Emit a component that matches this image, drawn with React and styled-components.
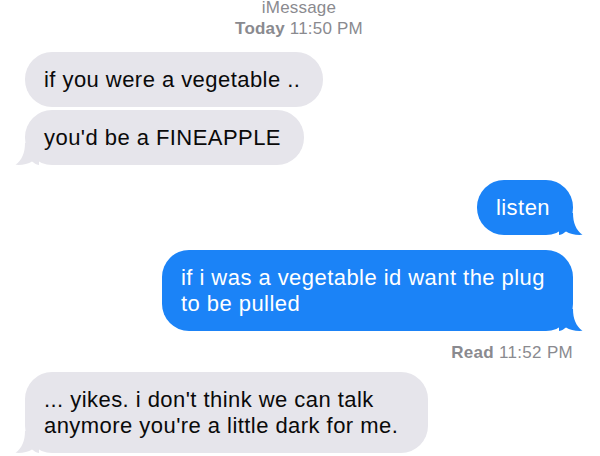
import React from 'react';
import styled, { createGlobalStyle } from 'styled-components';

const GlobalStyle = createGlobalStyle`
  html, body {
    margin: 0;
    padding: 0;
    background: #ffffff;
  }
  body {
    font-family: "Liberation Sans", Arial, Helvetica, sans-serif;
    overflow: hidden;
  }
`;

const Thread = styled.div`
  display: flex;
  flex-direction: column;
  width: 600px;
  height: 456px;
  box-sizing: border-box;
  padding: 0 27px 0 25px;
  overflow: hidden;
`;

const Header = styled.div`
  margin-top: -3px;
  margin-bottom: 13px;
  text-align: center;
  font-size: 17px;
  line-height: 21px;
  letter-spacing: 0.2px;
  color: #8a8a8f;
`;

const Day = styled.span`
  font-weight: 700;
`;

const Row = styled.div`
  display: flex;
  justify-content: ${({ $mine }) => ($mine ? 'flex-end' : 'flex-start')};
  margin-top: ${({ $gap }) => $gap || 0}px;
`;

const Bubble = styled.div`
  position: relative;
  width: fit-content;
  max-width: ${({ $max }) => $max || 411}px;
  box-sizing: border-box;
  padding: 15px 23px 14px 19px;
  border-radius: 27px;
  font-size: 22px;
  line-height: 26px;
  letter-spacing: 0.45px;
  background: ${({ $mine }) => ($mine ? '#1b83f7' : '#e6e5eb')};
  color: ${({ $mine }) => ($mine ? '#ffffff' : '#0a0a0a')};
`;

const Tail = styled.svg`
  position: absolute;
  bottom: 0;
  width: 24px;
  height: 22px;
  ${({ $mine }) => ($mine ? 'right: -10px;' : 'left: -10px; transform: scaleX(-1);')}
`;

const Status = styled.div`
  margin-top: 11px;
  text-align: right;
  font-size: 17px;
  line-height: 21px;
  letter-spacing: 0.3px;
  color: #8a8a8f;
`;

const Strong = styled.span`
  font-weight: 700;
`;

const BubbleTail = ({ mine }) => (
  <Tail $mine={mine} viewBox="0 0 24 22">
    <path
      d="M0 0 H14 C14 10 17 17 23.5 21.8 C17 22.3 11 21 7 18.5 C5 20 3 21.5 0 22 Z"
      fill={mine ? '#1b83f7' : '#e6e5eb'}
    />
  </Tail>
);

const Message = ({ mine, tail, gap, max, children }) => (
  <Row $mine={mine} $gap={gap}>
    <Bubble $mine={mine} $max={max}>
      {tail && <BubbleTail mine={mine} />}
      {children}
    </Bubble>
  </Row>
);

const App = () => {
  return (
    <>
      <GlobalStyle />
      <Thread>
        <Header>
          <div>iMessage</div>
          <div>
            <Day>Today</Day> 11:50 PM
          </div>
        </Header>

        <Message>if you were a vegetable ..</Message>
        <Message tail gap={3}>you'd be a FINEAPPLE</Message>

        <Message mine tail gap={15}>listen</Message>
        <Message mine tail gap={15}>
          if i was a vegetable id want the plug to be pulled
        </Message>

        <Status>
          <Strong>Read</Strong> 11:52 PM
        </Status>

        <Message tail gap={9} max={403}>
          ... yikes. i don't think we can talk anymore you're a little dark for me.
        </Message>
      </Thread>
    </>
  );
};

export default App;
